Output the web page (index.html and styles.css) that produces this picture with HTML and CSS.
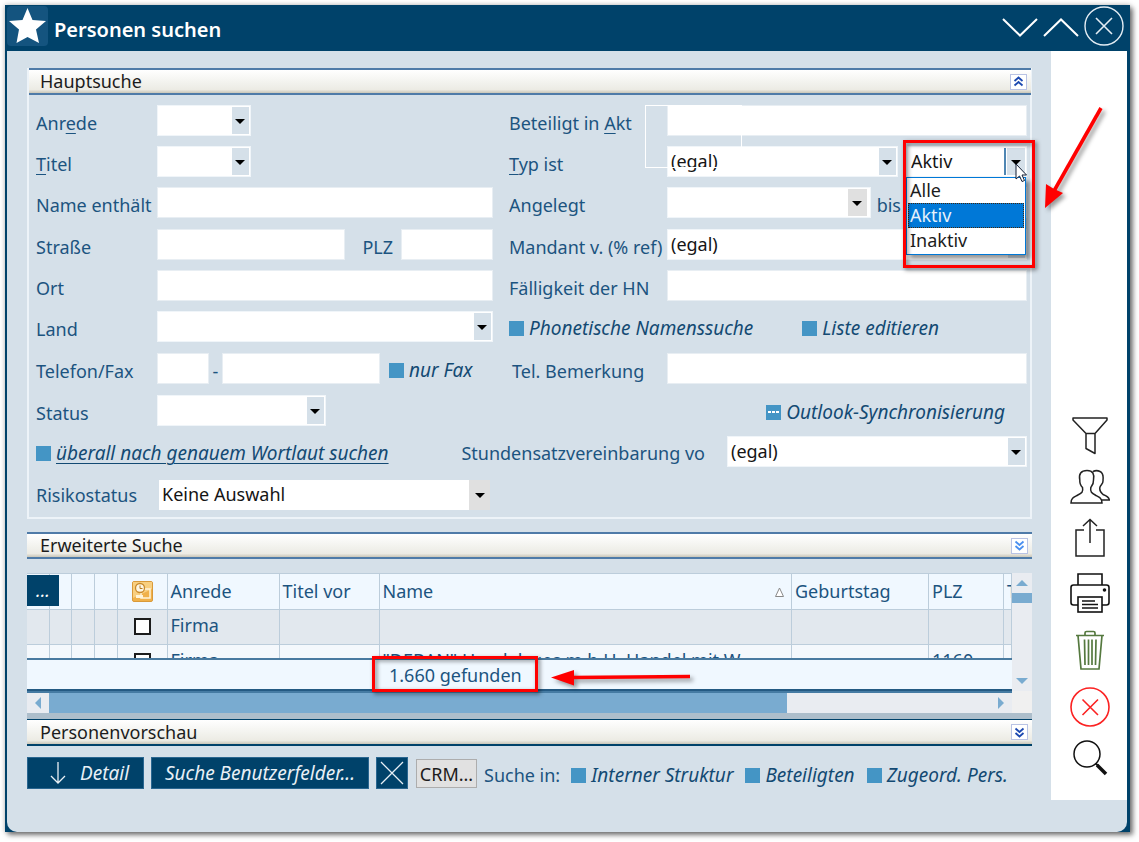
FILE: index.html
```html
<!DOCTYPE html>
<html lang="de">
<head>
<meta charset="utf-8">
<title>Personen suchen</title>
<link rel="stylesheet" href="styles.css">
</head>
<body>
<div class="window">
  <header class="titlebar">
    <span class="star-tile">
      <svg width="41" height="40" viewBox="0 0 41 40" aria-hidden="true"><path d="M20.500 2 L25.500 14 L39 15 L29 23.500 L32 37 L20.500 31 L9.500 37 L12 23.500 L2 15 L15.500 14 Z" fill="#fff"/></svg>
    </span>
    <h1 class="title">Personen suchen</h1>
    <div class="win-buttons">
      <button class="icon-btn" aria-label="Nach unten"><svg width="36" height="40" viewBox="0 0 36 40"><path d="M1 13 L18 29.500 L35 13" fill="none" stroke="#fff" stroke-width="2"/></svg></button>
      <button class="icon-btn" aria-label="Nach oben"><svg width="36" height="40" viewBox="0 0 36 40"><path d="M1 30 L18 13.500 L35 30" fill="none" stroke="#fff" stroke-width="2"/></svg></button>
      <button class="icon-btn" aria-label="Schließen"><svg width="40" height="40" viewBox="0 0 40 40"><circle cx="20" cy="20" r="19" fill="none" stroke="#e4edf4" stroke-width="1.400"/><path d="M12 12 L28 28 M28 12 L12 28" stroke="#e4edf4" stroke-width="1.600"/></svg></button>
    </div>
  </header>

  <div class="content">
    <main class="main">
      <section class="panel">
        <div class="bar">
          <h2>Hauptsuche</h2>
          <button class="fold" aria-label="Einklappen"><svg width="11" height="11" viewBox="0 0 11 11"><path d="M1.500 5 L5.500 1.500 L9.500 5 M1.500 9.500 L5.500 6 L9.500 9.500" fill="none" stroke="#1c49b0" stroke-width="1.800"/></svg></button>
        </div>
        <form class="form">
          <div class="row">
            <label for="anrede">Anr<u>e</u>de</label>
            <div class="cell"><span class="select w-94"><select id="anrede"><option></option></select></span></div>
            <label class="col2" for="akt">Beteiligt in <u>A</u>kt</label>
            <div class="cell ghost"><input id="akt" class="text grow" type="text"></div>
          </div>
          <div class="row">
            <label for="titel"><u>T</u>itel</label>
            <div class="cell"><span class="select w-94"><select id="titel"><option></option></select></span></div>
            <label class="col2" for="typ"><u>T</u>yp ist</label>
            <div class="cell type">
              <span class="select grow"><select id="typ"><option>(egal)</option></select></span>
              <div class="combo">
                <span class="select open"><select aria-label="Aktivstatus"><option>Aktiv</option></select></span>
                <ul class="menu" role="listbox">
                  <li role="option">Alle</li>
                  <li role="option" class="chosen" aria-selected="true">Aktiv</li>
                  <li role="option">Inaktiv</li>
                </ul>
                <span class="mark mark-menu"></span>
                <svg class="cursor" width="13" height="20" viewBox="0 0 13 20" aria-hidden="true"><path d="M1 1 V16 L4.500 13 L7 18.500 L9.500 17.500 L7 12 H11.500 Z" fill="#fff" stroke="#111c33" stroke-width="1"/></svg>
                <svg class="arrow arrow-menu" width="66" height="110" viewBox="0 0 66 110" aria-hidden="true"><path d="M61 4 L14 87" stroke="#f00" stroke-width="3.600"/><path d="M5 104 L6 80 L14 85 L23 89 Z" fill="#f00"/></svg>
              </div>
            </div>
          </div>
          <div class="row">
            <label for="name">Name enthält</label>
            <div class="cell"><input id="name" class="text grow" type="text"></div>
            <label class="col2" for="angelegt">Angelegt</label>
            <div class="cell date">
              <span class="select grow gray"><select id="angelegt"><option></option></select></span>
              <label for="bis">bis</label>
              <span class="select w-120 gray"><select id="bis"><option></option></select></span>
            </div>
          </div>
          <div class="row">
            <label for="strasse">Straße</label>
            <div class="cell street"><input id="strasse" class="text grow" type="text"><label for="plz">PLZ</label><input id="plz" class="text w-92" type="text"></div>
            <label class="col2" for="mandant">Mandant v. (% ref)</label>
            <div class="cell"><span class="select grow"><select id="mandant"><option>(egal)</option></select></span></div>
          </div>
          <div class="row">
            <label for="ort">Ort</label>
            <div class="cell"><input id="ort" class="text grow" type="text"></div>
            <label class="col2" for="hn">Fälligkeit der HN</label>
            <div class="cell"><input id="hn" class="text grow" type="text"></div>
          </div>
          <div class="row">
            <label for="land">Land</label>
            <div class="cell"><span class="select grow"><select id="land"><option></option></select></span></div>
            <div class="checks col2">
              <label class="check"><input type="checkbox">Phonetische Namenssuche</label>
              <label class="check"><input type="checkbox">Liste editieren</label>
            </div>
          </div>
          <div class="row">
            <label for="tel">Telefon/Fax</label>
            <div class="cell phone"><input id="tel" class="text w-52" type="text"><span class="dash">-</span><input aria-label="Nummer" class="text grow" type="text"><label class="check"><input type="checkbox">nur Fax</label></div>
            <label class="col2 inset" for="bem">Tel. Bemerkung</label>
            <div class="cell"><input id="bem" class="text grow" type="text"></div>
          </div>
          <div class="row">
            <label for="status">Status</label>
            <div class="cell"><span class="select w-169"><select id="status"><option></option></select></span></div>
            <div class="checks col2 end"><label class="check dots"><input type="checkbox">Outlook-Synchronisierung</label></div>
          </div>
          <div class="row-flex">
            <label class="check under"><input type="checkbox"><u>überall nach genauem Wortlaut suchen</u></label>
            <label class="push" for="satz">Stundensatzvereinbarung vo</label>
            <span class="select w-300"><select id="satz"><option>(egal)</option></select></span>
          </div>
          <div class="row risk">
            <label for="risiko">Risikostatus</label>
            <div class="cell"><span class="select grow flat"><select id="risiko"><option>Keine Auswahl</option></select></span></div>
          </div>
        </form>
      </section>

      <section class="bar">
        <h2>Erweiterte Suche</h2>
        <button class="fold" aria-label="Ausklappen"><svg width="11" height="11" viewBox="0 0 11 11"><path d="M1.500 1.500 L5.500 5 L9.500 1.500 M1.500 6 L5.500 9.500 L9.500 6" fill="none" stroke="#4a90f0" stroke-width="1.800"/></svg></button>
      </section>

      <section class="list">
        <div class="list-view">
          <button class="more">...</button>
          <div class="table-clip">
            <table class="people">
              <colgroup><col class="c-22"><col class="c-22"><col class="c-23"><col class="c-23"><col class="c-50"><col class="c-112"><col class="c-100"><col><col class="c-137"><col class="c-75"><col class="c-8"></colgroup>
              <thead>
                <tr>
                  <th></th><th></th><th></th><th></th>
                  <th class="mid"><svg width="21" height="21" viewBox="0 0 21 21" aria-label="Outlook"><rect x=".5" y=".5" width="20" height="20" rx="1.500" fill="#f0b14a" stroke="#d99a3a"/><path d="M1 1 H20 V8 L1 17 Z" fill="#f8cf80"/><rect x="9" y="8" width="9" height="9" fill="none" stroke="#fff4d8" stroke-width="1.500"/><circle cx="8" cy="7" r="4.500" fill="#fdf6e3" stroke="#c98a2c" stroke-width="1.300"/><path d="M8 4.500 V7.500 H10.500" fill="none" stroke="#b8791f"/><path d="M4 14 H11 V17 H4 Z" fill="#fff4d8"/></svg></th>
                  <th>Anrede</th><th>Titel vor</th>
                  <th><span class="sorted">Name <svg width="9" height="10" viewBox="0 0 9 10" aria-hidden="true"><path d="M4.500 1 L8.500 9.500 H.5 Z" fill="#fff" stroke="#888"/></svg></span></th>
                  <th>Geburtstag</th><th>PLZ</th><th>T</th>
                </tr>
              </thead>
              <tbody>
                <tr class="alt"><td></td><td></td><td></td><td></td><td class="mid"><input type="checkbox" aria-label="Firma auswählen"></td><td>Firma</td><td></td><td></td><td></td><td></td><td></td></tr>
                <tr><td></td><td></td><td></td><td></td><td class="mid"><input type="checkbox" aria-label="Firma auswählen"></td><td>Firma</td><td></td><td>"DEBAN" Handelsges.m.b.H. Handel mit W</td><td></td><td>1160</td><td></td></tr>
              </tbody>
            </table>
          </div>
          <div class="summary">
            <span class="count">1.660 gefunden<span class="mark mark-count"></span>
              <svg class="arrow arrow-count" width="144" height="22" viewBox="0 0 144 22" aria-hidden="true"><path d="M22 11.500 L140 10.500" stroke="#f00" stroke-width="3.600"/><path d="M1 11.500 L24 4 V19.500 Z" fill="#f00"/></svg>
            </span>
          </div>
        </div>
        <div class="vscroll"><span class="tri up"></span><span class="vthumb"></span><span class="tri down"></span></div>
        <div class="hscroll"><span class="hbox"><span class="tri left"></span></span><span class="hthumb"></span><span class="hrest"><span class="tri right"></span></span></div>
        <div class="corner"></div>
      </section>

      <section class="bar preview">
        <h2>Personenvorschau</h2>
        <button class="fold" aria-label="Ausklappen"><svg width="11" height="11" viewBox="0 0 11 11"><path d="M1.500 1.500 L5.500 5 L9.500 1.500 M1.500 6 L5.500 9.500 L9.500 6" fill="none" stroke="#1c49b0" stroke-width="1.800"/></svg></button>
      </section>

      <footer class="actions">
        <button class="btn detail"><svg width="16" height="24" viewBox="0 0 16 24" aria-hidden="true"><path d="M8 1 V22 M1 15 L8 22 L15 15" fill="none" stroke="#e8f0f6" stroke-width="1.300"/></svg>Detail</button>
        <button class="btn fields">Suche Benutzerfelder...</button>
        <button class="btn cross" aria-label="Leeren"><svg width="24" height="24" viewBox="0 0 24 24"><path d="M1 1 L23 23 M23 1 L1 23" stroke="#e8f0f6" stroke-width="1.300"/></svg></button>
        <button class="btn crm">CRM...</button>
        <span class="in">Suche in:</span>
        <label class="check"><input type="checkbox">Interner Struktur</label>
        <label class="check"><input type="checkbox">Beteiligten</label>
        <label class="check"><input type="checkbox">Zugeord. Pers.</label>
      </footer>
    </main>

    <aside class="tools">
      <div class="group tight">
        <button class="icon-btn" aria-label="Filter"><svg width="40" height="40" viewBox="0 0 40 40"><path d="M3 2 H37 V4 L25 17.500 V37.500 L16 32.500 V17.500 L3 4 Z M16 17.500 H25" fill="none" stroke="#222" stroke-width="1.500" stroke-linejoin="round"/></svg></button>
        <button class="icon-btn" aria-label="Personen"><svg width="40" height="40" viewBox="0 0 40 40"><path d="M23 4.500 C25 3.500 28 3.500 30 4.500 C33 6 33.500 9 33 13 C33.500 17 31 17 30 20 C29 24 31 26 33 27.500 C37 29 39 30 39.300 33 H31" fill="none" stroke="#222" stroke-width="1.500"/><path d="M1 36 C1 31 4 30 7 28.500 C12 26 13.500 25 12.500 20.500 C11 19 9.500 17 9.800 13 C8.500 7 11 3.500 17 3.500 C23 3.500 24.500 7 23.500 13 C23.800 17 22 19 20.800 20.500 C20 25 21.500 26 26 28.500 C29 30 32 31 32 36 Z" fill="#fff" stroke="#222" stroke-width="1.500"/></svg></button>
        <button class="icon-btn" aria-label="Exportieren"><svg width="40" height="40" viewBox="0 0 40 40"><path d="M14 12 H6 V38 H34 V12 H26 M20 25 V1.500 M13 8 L20 1.500 L27 8" fill="none" stroke="#222" stroke-width="1.500"/></svg></button>
      </div>
      <div class="group">
        <button class="icon-btn" aria-label="Drucken"><svg width="40" height="40" viewBox="0 0 40 40" fill="none" stroke="#111" stroke-width="1.600"><path d="M8 12 V1 H32 V12 M8 32 H3.500 Q1 32 1 29.500 V14.500 Q1 12 3.500 12 H36.500 Q39 12 39 14.500 V29.500 Q39 32 36.500 32 H32"/><rect x="8" y="24" width="24" height="15"/><path d="M12 28 H25 M12 31.500 H28 M12 35 H28"/><circle cx="34.500" cy="17" r="1" fill="#111"/></svg></button>
        <button class="icon-btn" aria-label="Löschen"><svg width="40" height="40" viewBox="0 0 40 40" fill="none" stroke="#55793f" stroke-width="1.700"><path d="M6 5.500 H34 M15 5.500 V3 Q15 1.500 16.500 1.500 H23.500 Q25 1.500 25 3 V5.500 M8 5.500 L11 39 H29 L32 5.500 M14.500 9.500 L15 35 M18.500 9.500 V35 M22 9.500 V35 M26 9.500 L25.500 35"/></svg></button>
        <button class="icon-btn" aria-label="Abbrechen"><svg width="40" height="40" viewBox="0 0 40 40" fill="none" stroke="#fb2222" stroke-width="1.600"><circle cx="20" cy="20" r="19"/><path d="M12.500 12.500 L28 28 M28 12.500 L12.500 28"/></svg></button>
      </div>
      <button class="icon-btn" aria-label="Suchen"><svg width="40" height="40" viewBox="0 0 40 40" fill="none" stroke="#111"><circle cx="17" cy="16" r="13" stroke-width="1.500"/><path d="M25.500 25.500 L28 27.500" stroke-width="2"/><path d="M27 27 L36 36" stroke-width="3.600"/></svg></button>
    </aside>
  </div>
</div>
</body>
</html>
```
FILE: styles.css
```css
* { box-sizing: border-box; }

body {
  margin: 0;
  padding: 5px 9px 9px 5px;
  background: #fff;
  font-family: "Noto Sans", "Open Sans", sans-serif;
  font-size: 18px;
  line-height: 34px;
  color: #1c5480;
}

button, input, select { font: inherit; color: inherit; margin: 0; padding: 0; border: 0; border-radius: 0; }
h1, h2 { margin: 0; font: inherit; }
label { white-space: nowrap; }
u { text-decoration-thickness: 1px; text-underline-offset: 3px; }

.window {
  padding: 0 3px 0 2px;
  background: #00426a;
  box-shadow: 3px 3px 5px rgba(0, 0, 0, .5), 0 0 5px rgba(0, 0, 0, .25);
}

/* Title bar */
.titlebar { display: flex; align-items: center; height: 46px; padding: 0 3px 4px 0; }
.star-tile { height: 40px; border-radius: 4px; background: #14547f; }
.star-tile svg, .icon-btn svg { display: block; }
.title { flex: 1; margin-left: 6px; padding-top: 8px; color: #fff; font-weight: 600; font-size: 20px; }
.win-buttons { display: flex; gap: 5px; }
.icon-btn { background: none; line-height: 0; }

.content { display: flex; gap: 19px; background: #d5e0e9; border-radius: 0 0 10px 10px; }
.main { flex: 1; min-width: 0; padding: 17px 0 40px 20px; }

/* Section bars */
.bar {
  display: flex;
  justify-content: space-between;
  align-items: center;
  height: 27px;
  padding: 0 4px 0 13px;
  border-top: 2px solid #4f7ba8;
  border-bottom: 2px solid #4f7ba8;
  background: linear-gradient(#fff, #f1f1ec 60%, #ecebe4 85%, #c9c6b8);
  color: #1c1c1c;
  line-height: 23px;
}
.fold { display: flex; align-items: center; justify-content: center; width: 17px; height: 16px; border: 1px solid #b9c3e4; background: #fff; }

.panel { margin-bottom: 13px; border: 2px solid #edf3f8; border-top: 0; }
.panel .bar { margin-right: -1px; padding: 0 4px 0 11px; }

/* Search form */
.form { display: grid; grid-template-rows: 31px 31px 32px 31px 31px 32px 32px 31px 34px 30px; row-gap: 10px; padding: 10px 3px 7px 7px; }
.row { display: grid; grid-template-columns: 121px minmax(0, 336fr) 174px minmax(0, 360fr); line-height: 36px; }
.row.risk { grid-template-columns: 123px minmax(0, 331fr) 177px minmax(0, 360fr); line-height: 30px; }
.row-flex { display: flex; }
.col2 { padding-left: 16px; }
.col2.inset { padding-left: 19px; }
.cell { display: flex; position: relative; align-items: flex-start; gap: 6px; }
.cell.type { gap: 9px; }
.cell.street { gap: 8px; }
.cell.street .grow { margin-right: 9px; }
.cell.phone { gap: 0; }
.cell.phone .check { width: 113px; padding-left: 9px; }
.dash { width: 13px; text-align: center; }
.push { margin-left: auto; margin-right: 22px; }
.text { height: 31px; min-width: 0; background: #fff; border: 1px solid #e8eef3; padding: 0 4px; }
.grow { flex: 1; min-width: 0; }
.w-52 { width: 52px; }
.w-92 { width: 92px; }
.w-94 { width: 94px; }
.w-120 { width: 120px; }
.w-169 { width: 169px; }
.w-300 { width: 300px; }

.ghost::after { content: ""; position: absolute; z-index: 2; left: -22px; top: 0; width: 95px; height: 61px; border: 1px solid #fff; pointer-events: none; }

.select { position: relative; display: block; height: 31px; background: #fff; border: 1px solid #f0f5f9; }
.select select { display: block; appearance: none; width: 100%; height: 29px; padding: 0 24px 0 3px; background: none; color: #151515; line-height: 29px; }
.select::before { content: ""; position: absolute; right: 1px; top: 1px; bottom: 1px; width: 17px; background: #d5e0e9; pointer-events: none; }
.select::after { content: ""; position: absolute; right: 5px; top: 13px; border: 5px solid transparent; border-top-color: #000; border-bottom: 0; pointer-events: none; }
.select.gray::before { background: #e0e0e0; width: 19px; right: 3px; }
.select.gray::after { right: 8px; }
.select.flat { height: 30px; border: 0; }
.select.flat::before { background: #e0e0e0; width: 21px; right: 0; top: 0; bottom: 0; }
.select.open::before { border-left: 1px solid #fff; width: 18px; box-shadow: -2px 0 0 #4f86b3; }

/* Check marks */
.check { display: flex; align-items: center; gap: 5px; height: 34px; font-size: 19px; font-style: italic; color: #134a73; }
.check input { appearance: none; flex: none; width: 15px; height: 15px; background: #4495c5; }
.check.dots input { display: flex; align-items: center; justify-content: center; }
.check.dots input::before { content: ""; width: 11px; height: 2px; background: repeating-linear-gradient(90deg, #fff 0 3px, transparent 3px 4px); }
.checks { display: flex; gap: 49px; grid-column: 3 / 5; }
.checks.end { justify-content: flex-end; padding-right: 22px; }

/* Open list of the status field */
.combo { position: relative; width: 120px; }
.menu { position: absolute; z-index: 3; left: -1px; right: 1px; top: 31px; margin: 0; padding: 0 1px 1px; list-style: none; border: 1px solid #0078d7; background: #fff; color: #1c1c1c; line-height: 25px; box-shadow: 4px 4px 4px rgba(0, 0, 0, .4); }
.menu li { padding: 0 2px; }
.menu .chosen { background: #0078d7; color: #e6f1fb; outline: 1px dotted #402810; outline-offset: -1px; }
.mark { position: absolute; z-index: 4; border: 3px solid #f00; pointer-events: none; filter: drop-shadow(2px 2px 2px rgba(0, 0, 0, .5)); }
.mark-menu { left: -4px; top: -6px; width: 132px; height: 128px; }
.cursor { position: absolute; z-index: 5; left: 108px; top: 17px; }
.arrow { position: absolute; z-index: 5; pointer-events: none; filter: drop-shadow(3px 3px 2px rgba(0, 0, 0, .4)); }
.arrow-menu { left: 133px; top: -42px; }

/* Result list */
.list { display: grid; grid-template-columns: minmax(0, 1fr) 20px; margin-top: 14px; padding-bottom: 6px; background: linear-gradient(#adbecb, #adbecb) bottom / 100% 6px no-repeat; }
.list-view { position: relative; background: #f0f8ff; }
.more { position: absolute; z-index: 2; left: 0; top: 2px; width: 32px; height: 31px; background: #00426a; color: #fff; font-style: italic; line-height: 31px; }
.table-clip { height: 85px; overflow: hidden; }
.people { width: 100%; table-layout: fixed; border-collapse: collapse; line-height: 33px; }
.people th, .people td { height: 35px; padding: 0 3px; border: 1px solid #bccddb; border-left: 0; text-align: left; font-weight: 400; white-space: nowrap; overflow: hidden; }
.people th { height: 36px; background: #f0f8ff; }
.people td { background: #f4f8fc; line-height: 31px; vertical-align: top; }
.people .alt td { background: #e2e8ee; }
.people .mid { text-align: center; padding: 0; }
.people .mid svg, .people .mid input { display: block; margin: 0 auto; }
.people .mid input { margin-top: 8px; }
.people input { appearance: none; width: 17px; height: 17px; border: 2px solid #1c1c1c; background: #fff; }
.sorted { display: flex; justify-content: space-between; align-items: center; padding-right: 4px; }
.c-8 { width: 8px; }
.c-22 { width: 22px; }
.c-23 { width: 23px; }
.c-50 { width: 50px; }
.c-75 { width: 75px; }
.c-100 { width: 100px; }
.c-112 { width: 112px; }
.c-137 { width: 137px; }
.summary { position: relative; height: 33px; border-top: 2px solid #4a7a9f; border-bottom: 2px solid #245a83; line-height: 31px; padding-left: 362px; }
.count { position: relative; display: inline-block; }
.mark-count { left: -17px; top: -4px; width: 166px; height: 36px; }
.arrow-count { left: 161px; top: 6px; }

.vscroll { display: flex; flex-direction: column; align-items: center; gap: 5px; padding: 7px 0; background: #e9ecf1; }
.vthumb { width: 100%; height: 10px; margin-top: 2px; background: #79abd0; }
.tri { display: block; border: 6px solid transparent; }
.tri.up { border-top: 0; border-bottom-color: #79abd0; }
.tri.down { border-bottom: 0; border-top-color: #79abd0; margin-top: auto; }
.tri.left { border-left: 0; border-right-color: #79abd0; }
.tri.right { border-right: 0; border-left-color: #79abd0; }
.hscroll { display: grid; grid-template-columns: 22px minmax(0, 738fr) minmax(0, 225fr); height: 22px; border-top: 2px solid #457ba3; background: #e9ecf1; }
.hbox, .hrest { display: flex; align-items: center; justify-content: center; }
.hrest { justify-content: flex-end; padding-right: 8px; }
.hthumb { background: #79abd0; }
.corner { background: #f0f0f0; }

.preview { border-color: #00426a; border-width: 1px 0 2px; }

/* Bottom row */
.actions { display: flex; align-items: flex-start; margin-top: 11px; white-space: nowrap; }
.btn { flex: none; height: 32px; background: #00426a; border: 1px solid #2a6690; color: #e8f0f6; font-size: 19px; font-style: italic; line-height: 30px; }
.detail { display: flex; align-items: center; gap: 14px; width: 117px; padding-left: 22px; margin-right: 7px; }
.fields { width: 218px; margin-right: 7px; }
.cross { display: flex; align-items: center; justify-content: center; width: 32px; margin-right: 8px; }
.crm { width: 61px; height: 29px; margin: 2px 7px 0 0; background: #e1e1e1; border: 1px solid #adadad; color: #1c1c1c; font-size: 18px; font-style: normal; line-height: 26px; }
.in { margin: 1px 11px 0 0; }
.actions .check { margin: 1px 12px 0 0; }

/* Tool column */
.tools { display: flex; flex-direction: column; justify-content: flex-end; align-items: center; gap: 11px; width: 76px; margin-bottom: 32px; padding: 0 0 22px 2px; background: #fff; }
.group { display: flex; flex-direction: column; gap: 17px; }
.group.tight { gap: 11px; margin-bottom: 4px; }
```
